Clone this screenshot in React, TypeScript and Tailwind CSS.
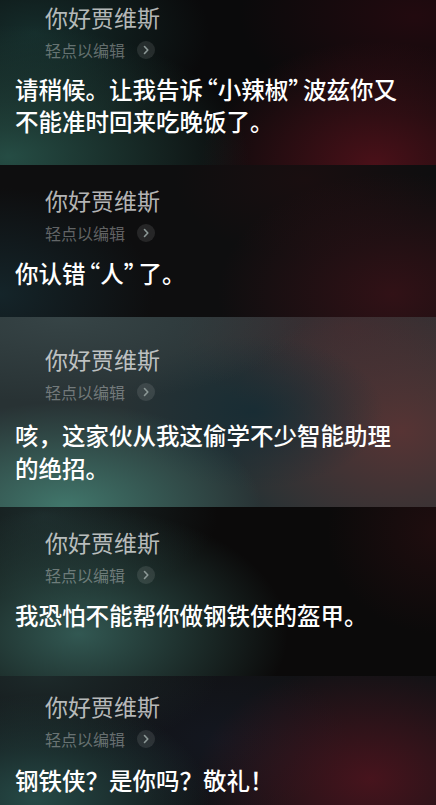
import React from "react";

type Panel = {
  h: string;
  pt: string;
  bg: string;
  leading: string;
  mainMt: string;
  lines: React.ReactNode[];
};

// curly quotes are narrower in the reference than the CJK full-width default
const Q1 = () => <span className="ml-[3px] [font-feature-settings:'halt']">“</span>;
const Q2 = () => <span className="mr-[3px] [font-feature-settings:'halt']">”</span>;

const panels: Panel[] = [
  {
    h: "h-[165px]",
    pt: "pt-[2px]",
    leading: "leading-[32px]",
    mainMt: "mt-[13px]",
    bg: "bg-[radial-gradient(ellipse_55%_80%_at_2%_95%,rgba(42,88,78,0.85),transparent),radial-gradient(ellipse_40%_60%_at_8%_20%,rgba(22,48,46,0.9),transparent),radial-gradient(ellipse_40%_75%_at_86%_100%,rgba(90,18,28,0.8),transparent),radial-gradient(ellipse_40%_60%_at_95%_10%,rgba(40,10,16,0.8),transparent)] bg-[#0a0a0b]",
    lines: [
      <>
        请稍候。让我告诉<Q1 />小辣椒<Q2 />波兹你又
      </>,
      <>不能准时回来吃晚饭了。</>,
    ],
  },
  {
    h: "h-[152px]",
    pt: "pt-[20px]",
    leading: "leading-[32px]",
    mainMt: "mt-[14px]",
    bg: "bg-[radial-gradient(ellipse_35%_70%_at_0%_85%,rgba(22,42,48,0.8),transparent),radial-gradient(ellipse_40%_80%_at_90%_85%,rgba(58,18,24,0.8),transparent),radial-gradient(ellipse_30%_50%_at_70%_10%,rgba(30,14,16,0.7),transparent)] bg-[#0e0e0f]",
    lines: [
      <>
        你认错<Q1 />人<Q2 />了。
      </>,
    ],
  },
  {
    h: "h-[190px]",
    pt: "pt-[27px]",
    leading: "leading-[33px]",
    mainMt: "mt-[17px]",
    bg: "bg-[radial-gradient(ellipse_45%_55%_at_15%_100%,rgba(66,122,110,0.95),transparent),radial-gradient(ellipse_55%_45%_at_15%_0%,rgba(56,70,72,0.9),transparent),radial-gradient(ellipse_30%_40%_at_58%_50%,rgba(22,44,52,0.9),transparent),radial-gradient(ellipse_40%_70%_at_92%_60%,rgba(92,52,52,0.9),transparent),radial-gradient(ellipse_40%_50%_at_80%_5%,rgba(64,44,48,0.85),transparent)] bg-[#283234]",
    lines: [<>咳，这家伙从我这偷学不少智能助理</>, <>的绝招。</>],
  },
  {
    h: "h-[169px]",
    pt: "pt-[20px]",
    leading: "leading-[32px]",
    mainMt: "mt-[14px]",
    bg: "bg-[radial-gradient(ellipse_48%_75%_at_18%_75%,rgba(52,92,86,0.95),transparent),radial-gradient(ellipse_40%_50%_at_10%_5%,rgba(30,46,46,0.9),transparent),radial-gradient(ellipse_25%_60%_at_100%_15%,rgba(36,14,16,0.8),transparent)] bg-[#0b0a0a]",
    lines: [<>我恐怕不能帮你做钢铁侠的盔甲。</>],
  },
  {
    h: "h-[129px]",
    pt: "pt-[15px]",
    leading: "leading-[32px]",
    mainMt: "mt-[15px]",
    bg: "bg-[radial-gradient(ellipse_40%_80%_at_8%_95%,rgba(40,80,76,0.9),transparent),radial-gradient(ellipse_40%_60%_at_10%_0%,rgba(30,44,44,0.9),transparent),radial-gradient(ellipse_40%_90%_at_85%_80%,rgba(80,20,30,0.85),transparent),radial-gradient(ellipse_30%_60%_at_50%_50%,rgba(20,24,34,0.8),transparent)] bg-[#111215]",
    lines: [<>钢铁侠？是你吗？敬礼！</>],
  },
];

function Chevron() {
  return (
    <span className="ml-3 flex h-[18px] w-[18px] items-center justify-center rounded-full bg-white/10">
      <svg width="8" height="10" viewBox="0 0 8 10" fill="none">
        <path d="M2.5 1.5 L5.8 5 L2.5 8.5" stroke="#8c9896" strokeWidth="1.6" strokeLinecap="round" strokeLinejoin="round" />
      </svg>
    </span>
  );
}

export default function App() {
  return (
    <div
      className="w-[436px] h-[805px] overflow-hidden flex flex-col bg-black"
      style={{ fontFamily: '"Noto Sans CJK SC", "Noto Sans", sans-serif' }}
    >
      {panels.map((p, i) => (
        <section key={i} className={`${p.h} ${p.pt} ${p.bg} shrink-0 overflow-hidden`}>
          <div className="pl-[45px] text-[23px] leading-[30px] text-white/70">你好贾维斯</div>
          <div className="mt-2 flex h-[20px] items-center pl-[45px] text-[16px] leading-[20px] text-white/35">
            <span>轻点以编辑</span>
            <Chevron />
          </div>
          <div className={`${p.mainMt} pl-[15px] pr-[10px] text-[23.5px] ${p.leading} font-medium text-white`}>
            {p.lines.map((l, j) => (
              <div key={j} className="whitespace-nowrap">
                {l}
              </div>
            ))}
          </div>
        </section>
      ))}
    </div>
  );
}
